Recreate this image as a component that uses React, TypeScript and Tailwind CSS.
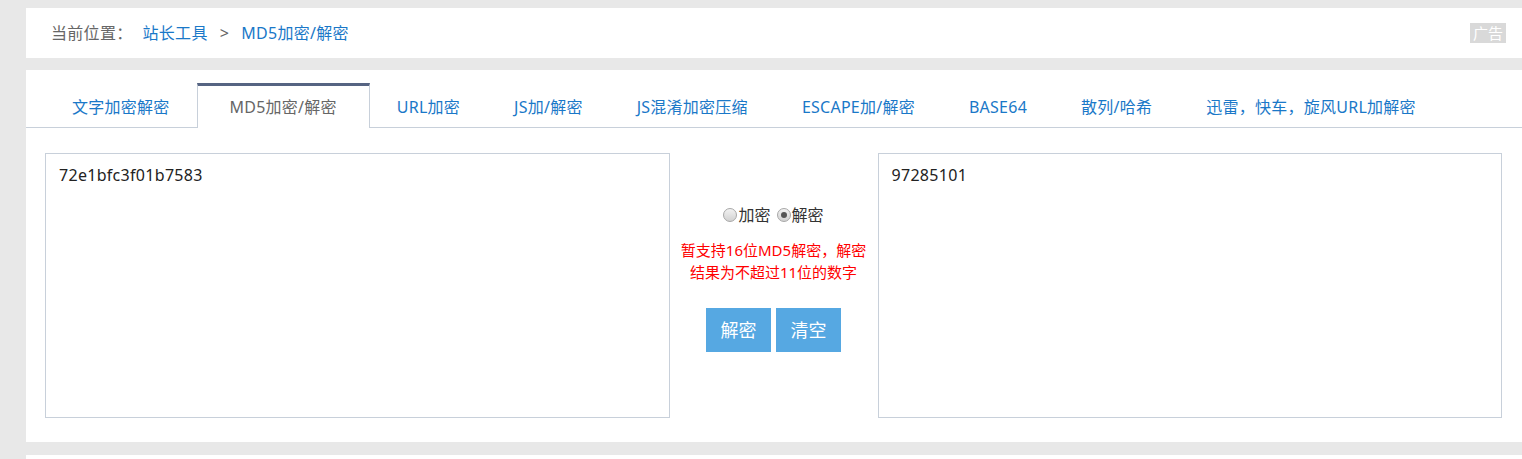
import React from "react";

const tabs = [
  "文字加密解密",
  "MD5加密/解密",
  "URL加密",
  "JS加/解密",
  "JS混淆加密压缩",
  "ESCAPE加/解密",
  "BASE64",
  "散列/哈希",
  "迅雷，快车，旋风URL加解密",
];

function Radio({ checked }: { checked?: boolean }) {
  return (
    <span className="mr-[1px] inline-flex h-[14px] w-[14px] items-center justify-center rounded-full border border-[#a7a7a7] bg-gradient-to-b from-[#f2f2f2] to-[#d2d2d2]">
      {checked && <span className="h-[6px] w-[6px] rounded-full bg-[#555]" />}
    </span>
  );
}

export default function App() {
  return (
    <div
      className="h-[459px] overflow-hidden bg-[#e8e8e8] pt-[8px] pl-[26px]"
      style={{ fontFamily: '"Noto Sans", "Noto Sans CJK SC", sans-serif' }}
    >
      <div className="flex h-[50px] items-center justify-between bg-white pl-[25px] pr-[16px]">
        <div className="flex items-center text-[16px] tracking-[0.3px]">
          <span className="text-[#666]">当前位置：</span>
          <span className="ml-[10px] text-[#1a78c8]">站长工具</span>
          <span className="mx-[12px] text-[#666]">&gt;</span>
          <span className="text-[#1a78c8]">MD5加密/解密</span>
        </div>
        <span className="flex h-[20px] items-center bg-[#d9d9d9] px-[3px] text-[15px] leading-none text-white">
          广告
        </span>
      </div>

      <div className="mt-[12px] h-[372px] bg-white pt-[13px]">
        <div className="flex border-b border-[#c8d0da] pl-[19px]">
          {tabs.map((t, i) =>
            i === 1 ? (
              <div
                key={t}
                className="-mb-px flex h-[45px] items-center border-x border-t-[3px] border-x-[#c8d0da] border-t-[#566482] bg-white px-[32px] text-[16px] tracking-[0.25px] text-[#666]"
              >
                {t}
              </div>
            ) : (
              <div
                key={t}
                className="flex h-[44px] items-center px-[27px] pt-[3px] text-[16px] tracking-[0.25px] text-[#1a78c8]"
              >
                {t}
              </div>
            )
          )}
        </div>

        <div className="flex px-[19px] pt-[25px] pr-[20px]">
          <div className="h-[265px] flex-1 border border-[#c8d0da] px-[13px] py-[9px] text-[16px] tracking-[0.3px] text-[#222]">
            72e1bfc3f01b7583
          </div>
          <div className="flex w-[208px] flex-col items-center pt-[50px]">
            <div className="flex items-center text-[16px] text-[#333]">
              <Radio />
              <span>加密</span>
              <span className="ml-[6px]" />
              <Radio checked />
              <span>解密</span>
            </div>
            <div className="mt-[12px] text-center text-[15px] leading-[22px] text-[#ff0000]">
              暂支持16位MD5解密，解密
              <br />
              结果为不超过11位的数字
            </div>
            <div className="mt-[25px] flex gap-[5px]">
              <button className="flex h-[44px] w-[65px] items-center justify-center bg-[#56a8e2] text-[18px] text-white">
                解密
              </button>
              <button className="flex h-[44px] w-[65px] items-center justify-center bg-[#56a8e2] text-[18px] text-white">
                清空
              </button>
            </div>
          </div>
          <div className="h-[265px] flex-1 border border-[#c8d0da] px-[13px] py-[9px] text-[16px] tracking-[0.3px] text-[#222]">
            97285101
          </div>
        </div>
      </div>

      <div className="mt-[13px] h-[40px] bg-white" />
    </div>
  );
}
